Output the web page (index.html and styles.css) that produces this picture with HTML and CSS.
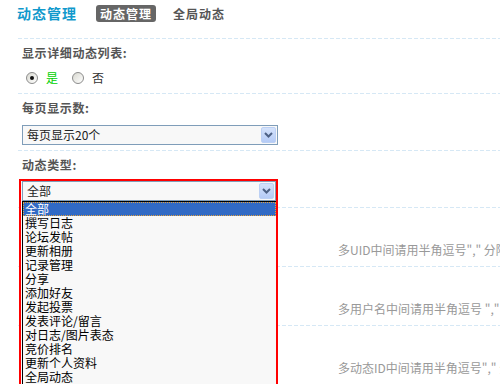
FILE: index.html
```html
<!DOCTYPE html>
<html lang="zh-CN">
  <head>
    <meta charset="UTF-8" />
    <title>动态管理</title>
    <link rel="stylesheet" href="styles.css">
  </head>
  <body>
    <div class="page">
      <div class="header">
        <h1 class="title">动态管理</h1>
        <div class="tabs">
          <a class="tab active" href="#">动态管理</a>
          <a class="tab" href="#">全局动态</a>
        </div>
      </div>

      <div class="form">
        <div class="row row-first">
          <div class="label">显示详细动态列表:</div>
          <div class="field radios">
            <span class="radio checked"></span><span class="opt-yes">是</span>
            <span class="radio"></span><span class="opt-no">否</span>
          </div>
        </div>

        <div class="row">
          <div class="label">每页显示数:</div>
          <div class="field">
            <div class="select select-wide">
              <span class="select-text">每页显示20个</span>
              <span class="select-btn"><svg width="9" height="6" viewBox="0 0 9 6"><path d="M1 1 L4.5 4.5 L8 1" fill="none" stroke="#4d6185" stroke-width="2"/></svg></span>
            </div>
          </div>
        </div>

        <div class="row">
          <div class="label">动态类型:</div>
          <div class="field combo">
            <div class="combo-popup">
              <div class="select">
                <span class="select-text">全部</span>
                <span class="select-btn"><svg width="9" height="6" viewBox="0 0 9 6"><path d="M1 1 L4.5 4.5 L8 1" fill="none" stroke="#4d6185" stroke-width="2"/></svg></span>
              </div>
              <ul class="options">
                <li class="selected">全部</li>
                <li>撰写日志</li>
                <li>论坛发帖</li>
                <li>更新相册</li>
                <li>记录管理</li>
                <li>分享</li>
                <li>添加好友</li>
                <li>发起投票</li>
                <li>发表评论/留言</li>
                <li>对日志/图片表态</li>
                <li>竞价排名</li>
                <li>更新个人资料</li>
                <li>全局动态</li>
              </ul>
            </div>
          </div>
        </div>

        <div class="row row-hint">
          <span class="hint">多UID中间请用半角逗号"," 分隔</span>
        </div>

        <div class="row row-hint">
          <span class="hint">多用户名中间请用半角逗号 "," 分隔</span>
        </div>

        <div class="row row-hint">
          <span class="hint">多动态ID中间请用半角逗号"," 分隔</span>
        </div>
      </div>
    </div>
  </body>
</html>
```

FILE: styles.css
```css
* {
  margin: 0;
  padding: 0;
  box-sizing: border-box;
}
html,
body {
  background: #fff;
  overflow: hidden;
}
body {
  font-family: "Noto Sans CJK SC", "Liberation Sans", sans-serif;
  font-size: 12px;
  color: #333;
}

.page {
  width: 760px;
  padding-left: 17px;
}

/* header */
.header {
  display: flex;
  align-items: center;
  height: 26px;
  margin-bottom: 12px;
}
.title {
  font-size: 14px;
  font-weight: bold;
  letter-spacing: 1px;
  color: #1199cc;
  line-height: 18px;
}
.tabs {
  display: flex;
  align-items: center;
  gap: 13px;
  margin-left: 19px;
}
.tab {
  display: block;
  padding: 0 4px;
  line-height: 17px;
  font-size: 12px;
  font-weight: bold;
  letter-spacing: 1px;
  color: #555;
  text-decoration: none;
  border-radius: 3px;
}
.tab.active {
  background: #666;
  color: #fff;
}

/* form rows */
.form {
  margin-left: 1px;
}
.row {
  padding: 4px 0 5px 4px;
  background-image: linear-gradient(to right, #d6e8f5 4px, transparent 4px);
  background-size: 6px 1px;
  background-repeat: repeat-x;
  background-position: 0 0;
}
.row-first {
  padding-bottom: 6px;
}
.label {
  padding-top: 1px;
  line-height: 19px;
  font-weight: bold;
  letter-spacing: 0.6px;
  color: #555;
}
.field {
  display: flex;
  align-items: center;
  margin-top: 8px;
  height: 20px;
}
.row-first .field {
  margin-top: 6px;
  height: 19px;
}

/* radios */
.radio {
  width: 12px;
  height: 12px;
  margin-left: 4px;
  border-radius: 50%;
  border: 1px solid #8c8c8c;
  background: linear-gradient(135deg, #d8d8d0, #fff);
  position: relative;
}
.radio.checked::after {
  content: "";
  position: absolute;
  left: 3px;
  top: 3px;
  width: 4px;
  height: 4px;
  border-radius: 50%;
  background: #111;
}
.opt-yes {
  margin-left: 8px;
  margin-right: 10px;
  color: #00d000;
}
.opt-no {
  margin-left: 8px;
  color: #333;
}

/* select */
.select {
  display: flex;
  align-items: center;
  width: 254px;
  height: 20px;
  border: 1px solid #7f9db9;
  background: #f8f8f8;
  color: #222;
}
.select-wide {
  width: 256px;
}
.select-text {
  flex: 1;
  padding-left: 4px;
  line-height: 18px;
}
.select-btn {
  display: flex;
  align-items: center;
  justify-content: center;
  width: 15px;
  height: 16px;
  margin-right: 1px;
  border: 1px solid #bcd0f4;
  border-radius: 2px;
  background: linear-gradient(#d4e2fb, #b5cbf6);
}

/* open dropdown */
.combo {
  position: relative;
}
.combo-popup {
  position: absolute;
  top: -3px;
  left: -3px;
  width: 259px;
  height: 207px;
  padding-left: 1px;
  border: 2px solid #ff0000;
  background: #f8f8f8;
  overflow: hidden;
  z-index: 5;
}
.options {
  list-style: none;
  width: 254px;
  border-top: 1px solid #000;
  border-left: 1px solid #000;
  background: #f8f8f8;
  color: #000;
}
.options li {
  height: 14px;
  line-height: 14px;
  padding-left: 2px;
  white-space: nowrap;
}
.options li.selected {
  background: #316ac5;
  color: #fff;
  outline: 1px dotted #e0a040;
  outline-offset: -1px;
}

.row-hint {
  padding: 33px 0 6px 320px;
}
.hint {
  display: block;
  line-height: 20px;
  color: #999;
  white-space: nowrap;
}
```
